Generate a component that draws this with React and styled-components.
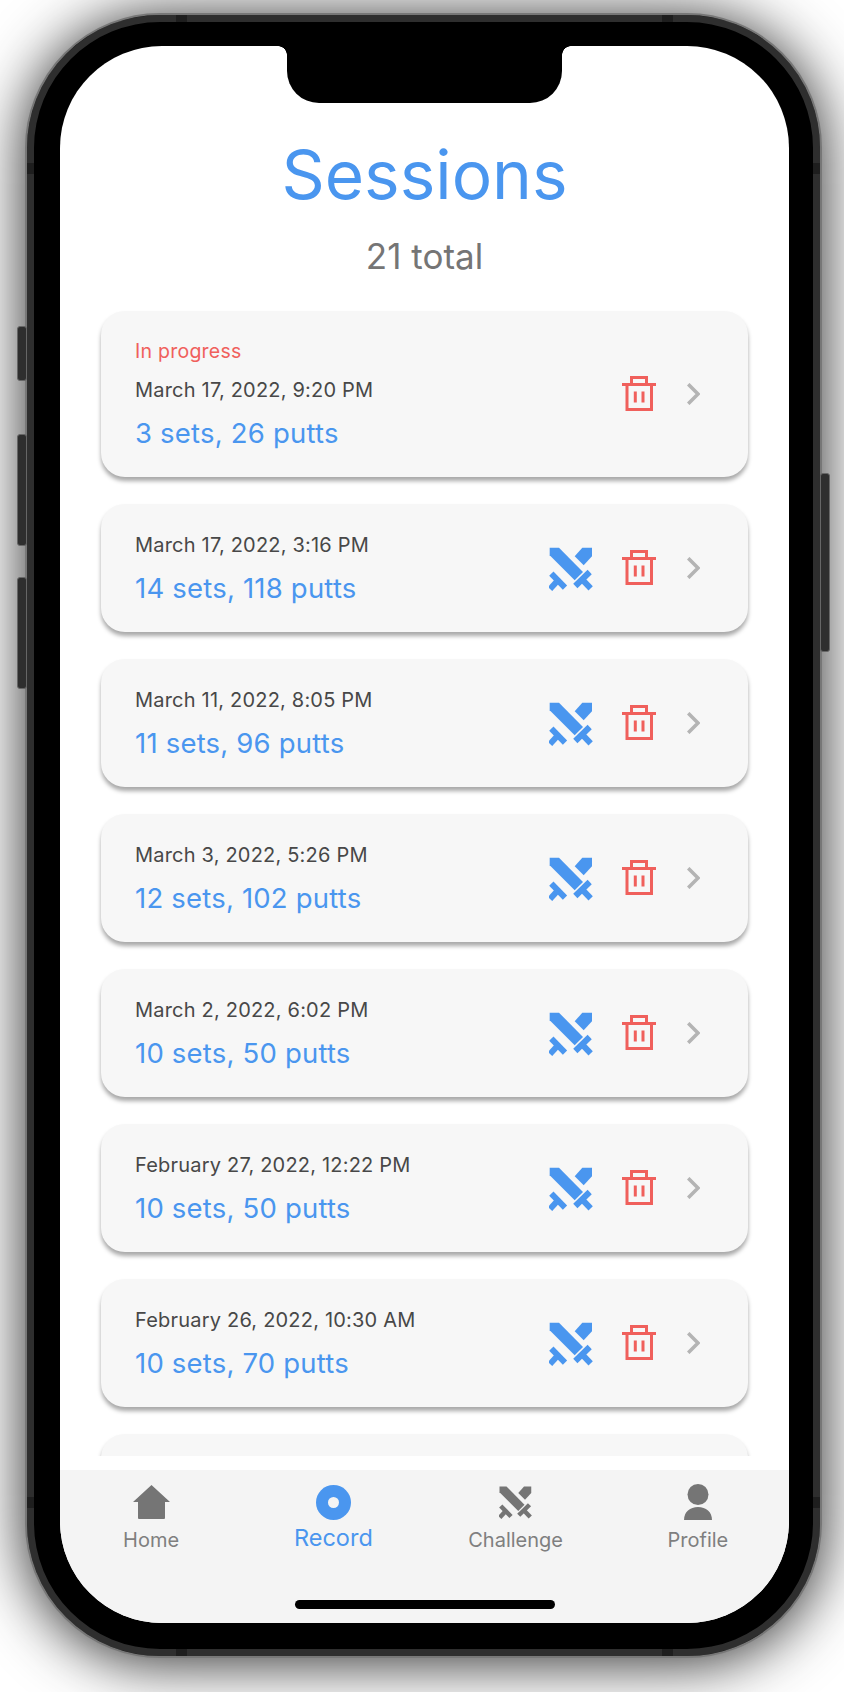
import styled, { createGlobalStyle } from 'styled-components';

const GlobalStyle = createGlobalStyle`
    html, body {
        margin: 0;
        padding: 0;
        background: #FFFFFF;
        font-family: Inter, "Liberation Sans", sans-serif;
    }
`;

const Page = styled.div`
    width: 844px;
    height: 1692px;
    overflow: hidden;
    padding: 13px 22px 0 25px;
    box-sizing: border-box;
`;

const Phone = styled.div`
    position: relative;
    width: 797px;
    height: 1645px;
    box-sizing: border-box;
    padding: 31px 31px 33px 33px;
    display: flex;
    background: #000000;
    border: 2px solid #777777;
    border-radius: 135px;
    box-shadow: inset 0 0 0 7px #2E2E2E, 0 4px 60px rgba(0, 0, 0, 0.85);
`;

const SideButton = styled.div`
    position: absolute;
    top: ${props => props.$top}px;
    ${props => props.$right ? 'right: -10px;' : 'left: -10px;'}
    width: 8px;
    height: ${props => props.$height}px;
    background: #2E2E2E;
    border: 1px solid #666666;
    border-radius: 3px;
`;

const Band = styled.div`
    position: absolute;
    background: #1E1E1E;
    ${props => props.$vertical ? `
        top: ${props.$at}px;
        ${props.$end ? 'right' : 'left'}: 0;
        width: 7px;
        height: 11px;
    ` : `
        left: ${props.$at}px;
        ${props.$end ? 'bottom' : 'top'}: 0;
        width: 11px;
        height: 7px;
    `}
`;

const Screen = styled.div`
    position: relative;
    flex: 1;
    display: flex;
    flex-direction: column;
    background: #FFFFFF;
    border-radius: 102px;
    overflow: hidden;
`;

const Notch = styled.div`
    position: absolute;
    top: 0;
    left: 227px;
    width: 275px;
    height: 57px;
    background: #000000;
    border-radius: 0 0 32px 32px;

    &::before, &::after {
        content: '';
        position: absolute;
        top: 0;
        width: 9px;
        height: 9px;
    }
    &::before {
        left: -9px;
        background: radial-gradient(circle at 0 100%, transparent 8.5px, #000000 9px);
    }
    &::after {
        right: -9px;
        background: radial-gradient(circle at 100% 100%, transparent 8.5px, #000000 9px);
    }
`;

const Header = styled.header`
    padding-top: 94px;
    text-align: center;
`;

const Title = styled.h1`
    margin: 0;
    font-size: 67.5px;
    line-height: 70px;
    font-weight: 400;
    color: #4A96EF;
`;

const Total = styled.p`
    margin: 26px 0 0;
    font-size: 35px;
    line-height: 40px;
    font-weight: 400;
    color: #757575;
`;

const List = styled.section`
    flex: 1;
    min-height: 0;
    overflow: hidden;
    display: flex;
    flex-direction: column;
    gap: 27px;
    padding: 35px 41px 0;
`;

const Card = styled.article`
    flex-shrink: 0;
    display: flex;
    align-items: center;
    min-height: 128px;
    box-sizing: border-box;
    padding: 29px 49px 29px 34px;
    background: #F7F7F7;
    border-radius: 24px;
    box-shadow: 0 4px 4px rgba(0, 0, 0, 0.34);
`;

const Info = styled.div`
    flex: 1;
`;

const Status = styled.div`
    font-size: 19.5px;
    line-height: 22px;
    margin-bottom: 16px;
    letter-spacing: 0.25px;
    color: #F0605C;
`;

const DateText = styled.div`
    font-size: 20px;
    line-height: 24px;
    letter-spacing: 0.2px;
    color: #484848;
`;

const Count = styled.div`
    margin-top: 16px;
    font-size: 27.5px;
    line-height: 30px;
    letter-spacing: 0.2px;
    color: #4A96EF;
`;

const Actions = styled.div`
    display: flex;
    align-items: center;
    gap: 30px;
`;

const TabBar = styled.nav`
    flex-shrink: 0;
    height: 153px;
    margin-top: 14px;
    box-sizing: border-box;
    padding-top: 14px;
    display: flex;
    flex-direction: column;
    align-items: center;
    background: #F4F4F4;
`;

const TabRow = styled.div`
    width: 100%;
    display: grid;
    grid-template-columns: repeat(4, 1fr);
`;

const Tab = styled.div`
    display: flex;
    flex-direction: column;
    align-items: center;
    color: ${props => props.$active ? '#4A96EF' : '#757575'};
`;

const TabIcon = styled.div`
    height: 36px;
    display: flex;
    align-items: center;
    justify-content: center;
`;

const TabLabel = styled.span`
    margin-top: ${props => props.$active ? 6 : 8}px;
    font-size: ${props => props.$active ? 23.5 : 20}px;
    line-height: 24px;
    color: ${props => props.$active ? '#4A96EF' : '#7F7F7F'};
`;

const HomeBar = styled.div`
    width: 260px;
    height: 9px;
    margin-top: 48px;
    background: #000000;
    border-radius: 5px;
`;

const SwordsIcon = ({ size = 44, color = '#4A96EF', className }) => (
    <svg className={className} width={size} height={size} viewBox="0 0 132 132" fill={color}>
        <path d="M2 2H30L102 75L77 100L2 25Z" />
        <path d="M100 2H129V28L104 55L77 28Z" />
        <g stroke={color} strokeWidth="18" fill="none">
            <path d="M122 75L79 117" />
            <path d="M97 95L125 124" />
            <path d="M7 80L48 122" />
            <path d="M27 100L3 126" />
        </g>
    </svg>
);

const CardSwords = styled(SwordsIcon)`
    margin: 2px -1px 0 0;
`;

const Trash = styled.svg`
    margin-bottom: 2px;
`;

const TrashIcon = () => (
    <Trash width="34" height="35" viewBox="0 0 34 35" fill="none" stroke="#F0605C" strokeWidth="3">
        <path d="M0 8.5H34" />
        <path d="M9.5 8.5V1.5H24.5V8.5" />
        <path d="M5 8.5V33.5H29.5V8.5" />
        <path d="M13.3 15.5V26.5M21 15.5V26.5" />
    </Trash>
);

const Chevron = styled.svg`
    margin: 0 -1px 0 1px;
`;

const ChevronIcon = () => (
    <Chevron width="13" height="22" viewBox="0 0 13 22" fill="none" stroke="#B4B4B4" strokeWidth="3.6">
        <path d="M1.2 1.2L11 11L1.2 20.8" />
    </Chevron>
);

const HomeIcon = () => (
    <svg width="37" height="34" viewBox="0 0 37 34" fill="#757575">
        <path d="M18.5 0L37 17H32V33A1 1 0 0 1 31 34H6A1 1 0 0 1 5 33V17H0Z" />
    </svg>
);

const RecordIcon = () => (
    <svg width="35" height="35" viewBox="0 0 35 35">
        <circle cx="17.5" cy="17.5" r="17.5" fill="#4A96EF" />
        <circle cx="17.5" cy="17.5" r="5.5" fill="#F4F4F4" />
    </svg>
);

const ProfileIcon = () => (
    <svg width="28" height="36" viewBox="0 0 28 36" fill="#757575">
        <circle cx="14" cy="10.5" r="10.5" />
        <path d="M0 36C0 28 6 23 14 23C22 23 28 28 28 36Z" />
    </svg>
);

const sessions = [
    { date: 'March 17, 2022, 9:20 PM', count: '3 sets, 26 putts', inProgress: true },
    { date: 'March 17, 2022, 3:16 PM', count: '14 sets, 118 putts' },
    { date: 'March 11, 2022, 8:05 PM', count: '11 sets, 96 putts' },
    { date: 'March 3, 2022, 5:26 PM', count: '12 sets, 102 putts' },
    { date: 'March 2, 2022, 6:02 PM', count: '10 sets, 50 putts' },
    { date: 'February 27, 2022, 12:22 PM', count: '10 sets, 50 putts' },
    { date: 'February 26, 2022, 10:30 AM', count: '10 sets, 70 putts' },
];

const App = () => {
    return (
        <Page>
            <GlobalStyle />
            <Phone>
                <SideButton $top={311} $height={53} />
                <SideButton $top={419} $height={110} />
                <SideButton $top={562} $height={110} />
                <SideButton $right $top={458} $height={177} />
                <Band $at={149} />
                <Band $at={635} />
                <Band $at={149} $end />
                <Band $at={635} $end />
                <Band $vertical $at={148} />
                <Band $vertical $at={148} $end />
                <Band $vertical $at={1482} />
                <Band $vertical $at={1482} $end />
                <Screen>
                    <Notch />
                    <Header>
                        <Title>Sessions</Title>
                        <Total>21 total</Total>
                    </Header>
                    <List>
                        {sessions.map(session =>
                            <Card key={session.date}>
                                <Info>
                                    {session.inProgress && <Status>In progress</Status>}
                                    <DateText>{session.date}</DateText>
                                    <Count>{session.count}</Count>
                                </Info>
                                <Actions>
                                    {!session.inProgress && <CardSwords />}
                                    <TrashIcon />
                                    <ChevronIcon />
                                </Actions>
                            </Card>)}
                        <Card />
                    </List>
                    <TabBar>
                        <TabRow>
                            <Tab>
                                <TabIcon><HomeIcon /></TabIcon>
                                <TabLabel>Home</TabLabel>
                            </Tab>
                            <Tab $active>
                                <TabIcon><RecordIcon /></TabIcon>
                                <TabLabel $active>Record</TabLabel>
                            </Tab>
                            <Tab>
                                <TabIcon><SwordsIcon size={33} color="#757575" /></TabIcon>
                                <TabLabel>Challenge</TabLabel>
                            </Tab>
                            <Tab>
                                <TabIcon><ProfileIcon /></TabIcon>
                                <TabLabel>Profile</TabLabel>
                            </Tab>
                        </TabRow>
                        <HomeBar />
                    </TabBar>
                </Screen>
            </Phone>
        </Page>
    )
}

export default App
